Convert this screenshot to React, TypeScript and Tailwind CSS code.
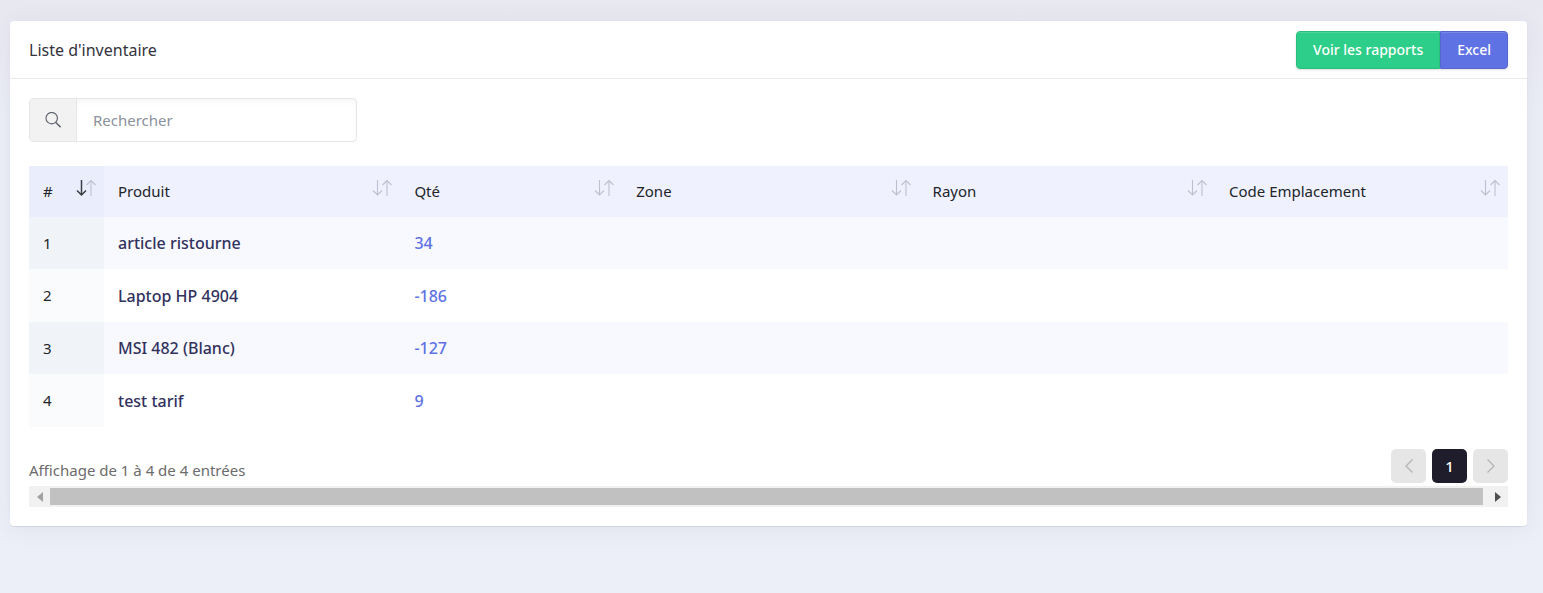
import React, { useState } from 'react';

interface InventoryRow {
    id: number;
    product: string;
    qty: number;
    zone: string;
    shelf: string;
    code: string;
}

const rows: InventoryRow[] = [
    { id: 1, product: 'article ristourne', qty: 34, zone: '', shelf: '', code: '' },
    { id: 2, product: 'Laptop HP 4904', qty: -186, zone: '', shelf: '', code: '' },
    { id: 3, product: 'MSI 482 (Blanc)', qty: -127, zone: '', shelf: '', code: '' },
    { id: 4, product: 'test tarif', qty: 9, zone: '', shelf: '', code: '' },
];

const columns = [
    { label: '#', width: 'w-[75px]' },
    { label: 'Produit', width: 'w-auto' },
    { label: 'Qté', width: 'w-[15%]' },
    { label: 'Zone', width: 'w-auto' },
    { label: 'Rayon', width: 'w-auto' },
    { label: 'Code Emplacement', width: 'w-[293px]' },
];

const SortIcon: React.FC<{ active: boolean }> = ({ active }) => (
    <svg width="20" height="18" viewBox="0 0 20 18" fill="none" strokeWidth="1.1">
        <path d="M5.5 1V16M1 11.5L5.5 16L10 11.5" stroke={active ? '#3d3d46' : '#bfc0cf'} strokeWidth={active ? 1.5 : 1.1} />
        <path d="M15 17V1.5M10.5 6L15 1.5L19.5 6" stroke="#bfc0cf" />
    </svg>
);

const App: React.FC = () => {
    const [search, setSearch] = useState('');
    const [sorted, setSorted] = useState('#');

    const visible = rows.filter(r => r.product.toLowerCase().includes(search.toLowerCase()));

    return (
        <div className="min-h-screen bg-[#eceef8] bg-linear-to-b from-[#e8e8f1] to-[#eceef8] to-20% pt-[21px] pr-4 pb-16 pl-[10px] font-['Noto_Sans','Open_Sans',sans-serif] text-[15px] text-[#212529]">
            <div className="rounded bg-white shadow-[0_1px_1px_rgba(0,0,0,0.08),0_2px_24px_rgba(60,50,70,0.07)]">
                {/* Header */}
                <div className="flex items-center justify-between border-b border-[#e9e9ec] px-[19px] pt-[10px] pb-[9px]">
                    <h1 className="text-base text-[#33333d]">Liste d'inventaire</h1>
                    <div className="flex rounded text-sm font-medium text-white shadow-sm">
                        <button className="h-[38px] rounded-l border border-[#29bd7d] bg-[#2dce89] px-4 shadow-[inset_0_1px_0_rgba(255,255,255,0.15)]">Voir les rapports</button>
                        <button className="h-[38px] rounded-r border border-[#5666d0] bg-[#5e72e4] px-4 shadow-[inset_0_1px_0_rgba(255,255,255,0.15)]">Excel</button>
                    </div>
                </div>

                <div className="px-[19px] pt-[19px] pb-[19px]">
                    {/* Search */}
                    <div className="flex h-11 w-[328px] rounded border border-[#e6e6e6]">
                        <label htmlFor="search" aria-label="Rechercher" className="flex w-[47px] items-center justify-center rounded-l-[3px] border-r border-[#e6e6e6] bg-[#f2f2f2]">
                            <svg width="16" height="16" viewBox="0 0 16 16" fill="none" stroke="#5b5f68" strokeWidth="1.1">
                                <circle cx="6.7" cy="6.2" r="5.7" />
                                <path d="M10.8 10.4L15.6 15.2" strokeWidth="1.4" />
                            </svg>
                        </label>
                        <input
                            id="search"
                            type="text"
                            value={search}
                            onChange={e => setSearch(e.target.value)}
                            placeholder="Rechercher"
                            className="min-w-0 flex-1 rounded-r px-4 shadow-[inset_0_5px_6px_-3px_rgba(0,0,0,0.05)] outline-none placeholder:text-[#8b919b]"
                        />
                    </div>

                    <table className="mt-6 w-full table-fixed text-left">
                        <thead>
                            <tr className="h-[51px] bg-[#eff1ff]">
                                {columns.map(c => (
                                    <th key={c.label} className={`${c.width} pr-1 pl-[14px] font-normal first:bg-[#eaedfc]`}>
                                        <button onClick={() => setSorted(c.label)} className="flex w-full items-center justify-between">
                                            {c.label}
                                            <span className="pr-1 pb-2">
                                                <SortIcon active={sorted === c.label} />
                                            </span>
                                        </button>
                                    </th>
                                ))}
                            </tr>
                        </thead>
                        <tbody>
                            {visible.map(r => (
                                <tr key={r.id} className="group odd:h-[52px] odd:bg-[#f8f9fe] even:h-[53px]">
                                    <td className="bg-[#fafbfd] pl-[14px] group-odd:bg-[#f0f4f9]">{r.id}</td>
                                    <td className="pl-[14px] text-base font-medium text-[#32325d]">{r.product}</td>
                                    <td className="pl-[14px] text-base font-medium text-[#5e72e4]">{r.qty}</td>
                                    <td className="pl-[14px]">{r.zone}</td>
                                    <td className="pl-[14px]">{r.shelf}</td>
                                    <td className="pl-[14px]">{r.code}</td>
                                </tr>
                            ))}
                        </tbody>
                    </table>

                    {/* Pagination */}
                    <div className="mt-[22px] flex items-center justify-between">
                        <p className="pt-2 text-[#6c6c6c]">Affichage de 1 à 4 de 4 entrées</p>
                        <div className="flex gap-[6px]">
                            <button aria-label="Précédent" className="flex h-[34px] w-[35px] items-center justify-center rounded-[5px] bg-[#e6e6e6]">
                                <svg width="8" height="14" viewBox="0 0 8 14" fill="none" stroke="#b4b4b4" strokeWidth="1.3">
                                    <path d="M7.5 0.5L1 7L7.5 13.5" />
                                </svg>
                            </button>
                            <button className="h-[34px] w-[35px] rounded-[5px] bg-[#1f1d2b] font-medium text-white">1</button>
                            <button aria-label="Suivant" className="flex h-[34px] w-[35px] items-center justify-center rounded-[5px] bg-[#e6e6e6]">
                                <svg width="8" height="14" viewBox="0 0 8 14" fill="none" stroke="#b4b4b4" strokeWidth="1.3">
                                    <path d="M0.5 0.5L7 7L0.5 13.5" />
                                </svg>
                            </button>
                        </div>
                    </div>

                    {/* Horizontal scrollbar */}
                    <div className="mt-[3px] flex h-[21px] bg-[#f1f1f1] py-[2px]">
                        <div className="flex w-[21px] items-center justify-center">
                            <svg width="6" height="10" viewBox="0 0 6 10" fill="#a3a3a3">
                                <path d="M6 0V10L0 5Z" />
                            </svg>
                        </div>
                        <div className="flex-1 bg-[#c1c1c1]" />
                        <div className="flex w-[25px] items-center justify-center pl-1">
                            <svg width="6" height="10" viewBox="0 0 6 10" fill="#505050">
                                <path d="M0 0V10L6 5Z" />
                            </svg>
                        </div>
                    </div>
                </div>
            </div>
        </div>
    );
};

export default App;
